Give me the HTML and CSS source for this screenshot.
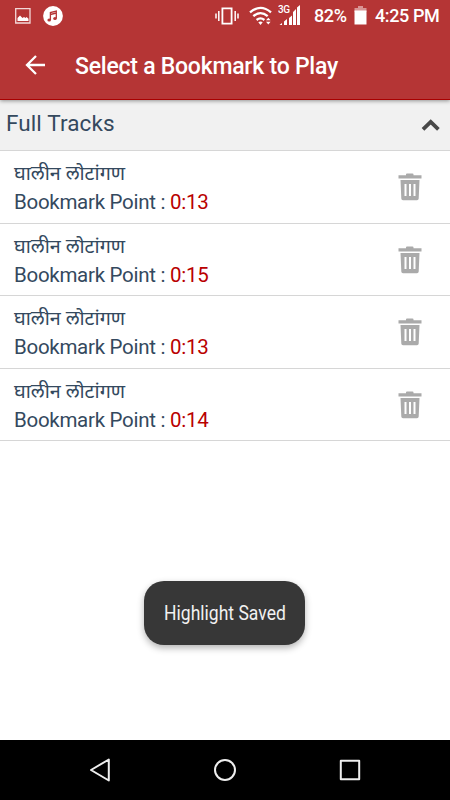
FILE: index.html
```html
<!DOCTYPE html>
<html lang="en">
<head>
  <meta charset="UTF-8">
  <title>Select a Bookmark to Play</title>
  <meta name="viewport" content="width=device-width, initial-scale=1.0">
  <link rel="stylesheet" href="styles.css">
</head>
<body>
  <!-- shared icons -->
  <svg class="defs" width="0" height="0">
    <symbol id="trash" viewBox="0 0 24 28">
      <path fill="#aaa" fill-rule="evenodd" d="M.5 2.200H8V1.500Q8 .5 9 .5h5.500q1 0 1 1v.7h8v3.200H.500zM2.500 6.900h19l-.8 18.600q-.1 1.700-1.700 1.700H5q-1.600 0-1.700-1.700zM6.500 11v12h2V11zm4.500 0v12h2V11zm4.500 0v12h2V11z"/>
    </symbol>
  </svg>

  <div class="screen">
    <header class="header">
      <div class="status-bar">
        <svg class="icon-picture" width="16" height="16" viewBox="0 0 16 16">
          <path fill="none" stroke="#f3d9d9" stroke-width="1.300" d="M.7.7h14.300v14.300H.7z"/>
          <path fill="#fff" d="M2.500 13V10l2.500-2.500 2.500 2.500 1.500-.9 1.500.9 1-1 2 1.800V13z"/>
        </svg>
        <svg class="icon-music" width="20" height="20" viewBox="0 0 20 20">
          <circle cx="10" cy="10" r="9.900" fill="#fff"/>
          <path fill="none" stroke="#b53535" stroke-width="1.300" d="M7.400 14V6.500l5.900-1.500v7.500M7.400 8.500l5.900-1.500"/>
          <ellipse cx="6.200" cy="14" rx="1.800" ry="1.500" fill="#b53535"/>
          <ellipse cx="12" cy="12.600" rx="1.800" ry="1.500" fill="#b53535"/>
        </svg>
        <svg class="icon-vibrate" width="24" height="18" viewBox="0 0 24 18">
          <path fill="none" stroke="#fff" stroke-width="1.800" d="M7.400 1.400h9.200v15.200H7.400z"/>
          <path stroke="#fff" stroke-width="1.500" d="M3.800 4v10M20.200 4v10M1 6.500v5M23 6.500v5"/>
        </svg>
        <svg class="icon-wifi" width="23" height="20" viewBox="0 0 23 20">
          <g fill="none" stroke="#fff" stroke-width="2.300">
            <path d="M1 6.300Q11.500-2.500 22 6.300"/>
            <path d="M4.300 10.200Q11.500 4 18.700 10.200"/>
            <path d="M7.600 14Q11.500 10.700 15.400 14"/>
          </g>
          <path fill="#fff" d="M9.300 16.300q2.200-1.500 4.400 0L11.500 19zM17 14.300l2.300-2.600 2.300 2.600zM17 15.800h4.600L19.300 18.500z"/>
        </svg>
        <svg class="icon-signal" width="23" height="22" viewBox="0 0 23 22">
          <text class="net" x="0" y="9">3G</text>
          <path fill="#fff" d="M1.500 21l2.500-2v2zM6 21v-3.500l3-2.500v6zM11 21V14l3-2.500V21zM15 21V8l3-3v16zM19 21V3.500L22 1v20z"/>
        </svg>
        <span class="percent">82%</span>
        <svg class="icon-battery" width="13" height="19" viewBox="0 0 13 19">
          <path fill="#d99494" d="M4 0h5v2h3.500v4H.5V2H4z"/>
          <path fill="#fff" d="M.5 4.500h12V18.500H.5z"/>
        </svg>
        <span class="clock">4:25 PM</span>
      </div>
      <div class="title-bar">
        <svg class="back" width="22" height="20" viewBox="0 0 22 20">
          <path fill="none" stroke="#fff" stroke-width="2.300" d="M21 10H3M12 1L3 10l9 9"/>
        </svg>
        <h1 class="title">Select a Bookmark to Play</h1>
      </div>
    </header>

    <main class="content">
      <div class="group">
        <span class="group-name">Full Tracks</span>
        <svg class="chevron" width="20" height="14" viewBox="0 0 20 14">
          <path fill="none" stroke="#484848" stroke-width="3.800" d="M2 11.300l7.700-7.500 7.700 7.500"/>
        </svg>
      </div>
      <ul class="bookmarks">
        <li class="bookmark">
          <div class="info">
            <p class="track" lang="mr">घालीन लोटांगण</p>
            <p class="point">Bookmark Point : <span class="time">0:13</span></p>
          </div>
          <svg class="trash"><use href="#trash"/></svg>
        </li>
        <li class="bookmark">
          <div class="info">
            <p class="track" lang="mr">घालीन लोटांगण</p>
            <p class="point">Bookmark Point : <span class="time">0:15</span></p>
          </div>
          <svg class="trash"><use href="#trash"/></svg>
        </li>
        <li class="bookmark">
          <div class="info">
            <p class="track" lang="mr">घालीन लोटांगण</p>
            <p class="point">Bookmark Point : <span class="time">0:13</span></p>
          </div>
          <svg class="trash"><use href="#trash"/></svg>
        </li>
        <li class="bookmark">
          <div class="info">
            <p class="track" lang="mr">घालीन लोटांगण</p>
            <p class="point">Bookmark Point : <span class="time">0:14</span></p>
          </div>
          <svg class="trash"><use href="#trash"/></svg>
        </li>
      </ul>
    </main>

    <div class="toast"><span class="toast-text">Highlight Saved</span></div>

    <nav class="nav-bar">
      <svg width="24" height="26" viewBox="0 0 24 26">
        <path fill="none" stroke="#eee" stroke-width="2" stroke-linejoin="round" d="M20.800 2.500v21L3 13z"/>
      </svg>
      <svg width="24" height="26" viewBox="0 0 24 26">
        <circle cx="12" cy="13" r="10" fill="none" stroke="#eee" stroke-width="2"/>
      </svg>
      <svg width="24" height="26" viewBox="0 0 24 26">
        <path fill="none" stroke="#eee" stroke-width="2" stroke-linejoin="round" d="M2.800 3.800h18.400v18.400H2.800z"/>
      </svg>
    </nav>
  </div>
</body>
</html>
```
FILE: styles.css
```css
* {
  margin: 0; padding: 0; box-sizing: border-box;
}
body {
  background: #fff;
  font-family: Roboto, "Noto Sans", sans-serif;
  overflow: hidden;
}
svg { display: block; flex: none; }
.defs { position: absolute; }
.screen {
  position: relative; display: flex; flex-direction: column;
  width: 450px; height: 800px;
}

/* header */
.header {
  position: relative; z-index: 1; height: 100px;
  background: #b53535; color: #fff;
  border-bottom: 1px solid #a80000;
  box-shadow: 0 1px 4px rgba(0, 0, 0, 0.4);
}
.status-bar {
  display: flex; align-items: center;
  height: 31px; padding-left: 15px;
  font-size: 18px; font-weight: 500; letter-spacing: -0.4px;
}
.icon-music { margin-left: 12px; }
.icon-vibrate { margin-left: 152px; }
.icon-wifi { margin-left: 10px; }
.icon-signal { margin-left: 6px; margin-top: -1px; }
.net { font-size: 10px; font-weight: 500; fill: #fff; }
.percent { width: 33px; margin-left: 13px; white-space: nowrap; }
.icon-battery { margin-left: 7px; }
.clock { margin-left: 8px; white-space: nowrap; }
.title-bar {
  display: flex; align-items: center;
  height: 68px; padding-left: 24px;
}
.title {
  margin: 4px 0 0 29px;
  font-size: 23px; font-weight: 500; line-height: 30px; letter-spacing: -0.24px;
}

/* list */
.content { flex: 1; color: #34495e; }
.group {
  display: flex; justify-content: space-between; align-items: center;
  height: 51px; padding: 0 9px 4px 6px;
  background: #f1f1f1; border-bottom: 1px solid #d6d6d6;
}
.group-name { font-size: 22.500px; line-height: 28px; letter-spacing: 0.1px; }
.chevron { margin-top: 4px; }
.bookmarks { list-style: none; }
.bookmark {
  display: flex; justify-content: space-between; align-items: center;
  height: 72.500px; padding: 0 28px 0 14px;
  border-bottom: 1px solid #d6d6d6;
}
.info { padding-top: 3px; }
.track { font-size: 19.800px; line-height: 29px; white-space: nowrap; }
.point {
  font-size: 20.500px; line-height: 29px; white-space: nowrap;
  letter-spacing: -0.28px;
}
.time { color: #b90000; }
.trash { width: 24px; height: 28px; margin-top: 1px; }

/* toast */
.toast {
  position: absolute; left: 144px; top: 581px;
  display: flex; justify-content: center; align-items: center;
  width: 161px; height: 64px;
  background: #373737; border-radius: 20px;
  box-shadow: 0 3px 7px rgba(0, 0, 0, 0.3);
}
.toast-text {
  font-size: 21px; color: #f1f1f1; white-space: nowrap;
  transform: scaleX(0.835);
}

/* system buttons */
.nav-bar {
  display: flex; justify-content: space-between; align-items: center;
  height: 60px; padding: 0 88px;
  background: #000;
}
```
